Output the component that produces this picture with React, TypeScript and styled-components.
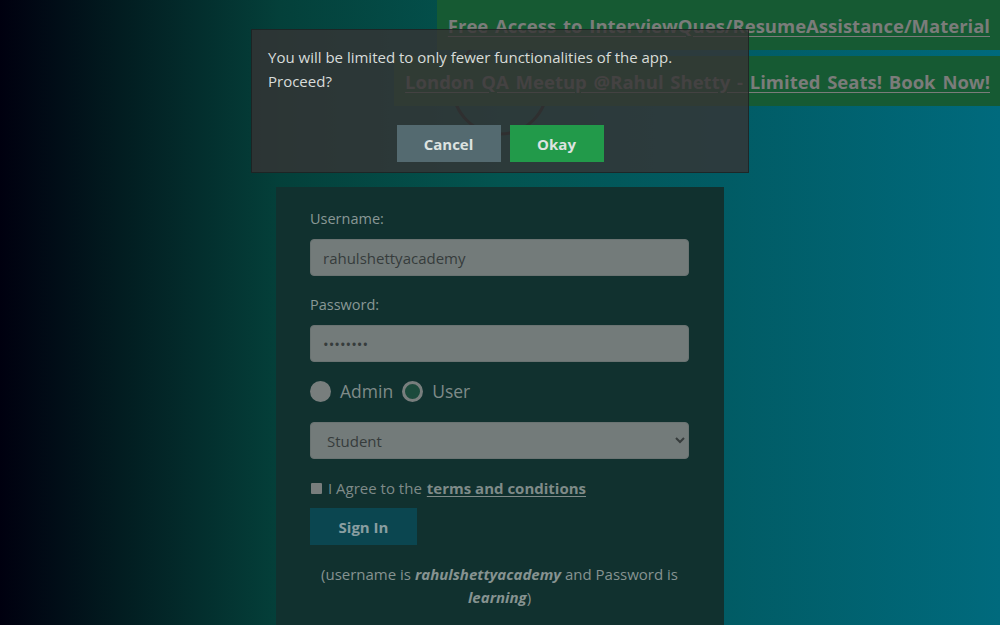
import React from "react";
import styled, { createGlobalStyle } from "styled-components";

const Global = createGlobalStyle`
  html, body { margin: 0; padding: 0; }
  body {
    width: 1000px;
    height: 625px;
    overflow: hidden;
    font-family: "Open Sans", "Noto Sans", sans-serif;
    background: linear-gradient(to right, #00000f 0%, #021c20 12%, #04403a 28%, #035450 50%, #015b64 72%, #006a7d 100%);
  }
`;

const Page = styled.div`
  position: relative;
  width: 1000px;
  height: 625px;
  overflow: hidden;
`;

const Header = styled.header`
  position: relative;
  height: 187px;
  display: flex;
  justify-content: center;
  padding-top: 37px;
  box-sizing: border-box;
`;

const Banners = styled.div`
  position: absolute;
  top: 0;
  right: 0;
  display: flex;
  flex-direction: column;
  align-items: flex-end;
  gap: 6px;
`;

const Banner = styled.div`
  height: 50px;
  display: flex;
  align-items: center;
  padding: 0 10px 0 11px;
  background: #165a33;
  box-sizing: border-box;
`;

const BannerLink = styled.a`
  color: #7b7c7a;
  font-weight: 700;
  font-size: 18.5px;
  word-spacing: 2px;
  text-decoration: underline;
  text-underline-offset: 3px;
  white-space: nowrap;
`;

const Card = styled.main`
  width: 448px;
  margin: 0 auto;
  background: #11312f;
  padding: 21px 35px 20px 34px;
  box-sizing: border-box;
  min-height: 438px;
`;

const Label = styled.label<{ $first?: boolean }>`
  display: block;
  color: #899896;
  font-size: 14.5px;
  line-height: 22px;
  margin: ${(p) => (p.$first ? "0" : "18px")} 0 9px;
`;

const Field = styled.input`
  display: block;
  width: 100%;
  height: 37px;
  box-sizing: border-box;
  border: 1px solid #6a7372;
  border-radius: 4px;
  background: #737b7a;
  color: #363c3c;
  font-family: inherit;
  font-size: 15px;
  padding: 0 12px;
  outline: none;
`;

const RadioRow = styled.div`
  display: flex;
  align-items: center;
  height: 26px;
  margin-top: 16px;
  color: #7f8b89;
  font-size: 17.5px;
`;

const Radio = styled.span<{ $checked?: boolean }>`
  width: 21px;
  height: 21px;
  border-radius: 50%;
  box-sizing: border-box;
  background: ${(p) => (p.$checked ? "#787e7d" : "#1c4a3c")};
  border: ${(p) => (p.$checked ? "none" : "3px solid #787e7d")};
  margin-right: 9px;
  flex: none;
`;

const RadioText = styled.span`
  margin-right: 9px;
`;

const Select = styled.select`
  display: block;
  width: 100%;
  height: 37px;
  margin-top: 18px;
  border: 1px solid #6a7372;
  border-radius: 4px;
  background: #737b7a;
  color: #363c3c;
  font-family: inherit;
  font-size: 15px;
  padding: 0 12px;
  outline: none;
`;

const AgreeRow = styled.div`
  display: flex;
  align-items: center;
  height: 22px;
  margin-top: 18px;
  color: #7f8b89;
  font-size: 15px;
`;

const Box = styled.span`
  width: 11px;
  height: 11px;
  background: #787e7d;
  border-radius: 1px;
  margin: 0 6px 0 1px;
  flex: none;
`;

const Terms = styled.a`
  color: #7f8b89;
  font-weight: 700;
  text-decoration: underline;
  text-underline-offset: 2px;
  margin-left: 5px;
`;

const SignIn = styled.button`
  display: block;
  width: 107px;
  height: 37px;
  margin-top: 9px;
  border: none;
  background: #0b4650;
  color: #899ea1;
  font-family: inherit;
  font-weight: 700;
  font-size: 15px;
`;

const Note = styled.p`
  margin: 18px 0 0;
  text-align: center;
  color: #869391;
  font-size: 15px;
  line-height: 23px;
  padding: 0;
  b { font-style: italic; }
`;

const Modal = styled.div`
  position: absolute;
  top: 29px;
  left: 251px;
  width: 498px;
  height: 144px;
  box-sizing: border-box;
  background: rgba(55, 51, 53, 0.8);
  border: 1px solid rgba(20, 26, 26, 0.6);
  padding: 15px 16px 10px;
  display: flex;
  flex-direction: column;
`;

const ModalText = styled.p`
  margin: 0;
  color: #d8dcda;
  font-size: 15px;
  line-height: 24px;
  flex: 1;
`;

const ModalActions = styled.div`
  display: flex;
  justify-content: center;
  gap: 9px;
`;

const ModalButton = styled.button<{ $variant: "cancel" | "ok" }>`
  height: 37px;
  width: ${(p) => (p.$variant === "ok" ? "94px" : "104px")};
  border: none;
  background: ${(p) => (p.$variant === "ok" ? "#229a4a" : "#546a70")};
  color: #dde3e0;
  font-family: inherit;
  font-weight: 700;
  font-size: 15px;
`;

export default function App() {
  return (
    <>
      <Global />
      <Page>
        <Header>
          <svg width="100" height="100" viewBox="0 0 100 100">
            <circle cx="50" cy="50" r="47" fill="none" stroke="#0f201e" strokeWidth="3" />
          </svg>
          <Banners>
            <Banner>
              <BannerLink>Free Access to InterviewQues/ResumeAssistance/Material</BannerLink>
            </Banner>
            <Banner>
              <BannerLink>London QA Meetup @Rahul Shetty - Limited Seats! Book Now!</BannerLink>
            </Banner>
          </Banners>
        </Header>
        <Card>
          <Label $first>Username:</Label>
          <Field defaultValue="rahulshettyacademy" />
          <Label>Password:</Label>
          <Field type="password" defaultValue="learning" />
          <RadioRow>
            <Radio $checked />
            <RadioText>Admin</RadioText>
            <Radio />
            <RadioText>User</RadioText>
          </RadioRow>
          <Select defaultValue="stud">
            <option value="stud">Student</option>
            <option value="teach">Teacher</option>
            <option value="consult">Consultant</option>
          </Select>
          <AgreeRow>
            <Box />
            I Agree to the
            <Terms>terms and conditions</Terms>
          </AgreeRow>
          <SignIn>Sign In</SignIn>
          <Note>
            (username is <b>rahulshettyacademy</b> and Password is <b>learning</b>)
          </Note>
        </Card>
        <Modal>
          <ModalText>
            You will be limited to only fewer functionalities of the app.
            <br />
            Proceed?
          </ModalText>
          <ModalActions>
            <ModalButton $variant="cancel">Cancel</ModalButton>
            <ModalButton $variant="ok">Okay</ModalButton>
          </ModalActions>
        </Modal>
      </Page>
    </>
  );
}
